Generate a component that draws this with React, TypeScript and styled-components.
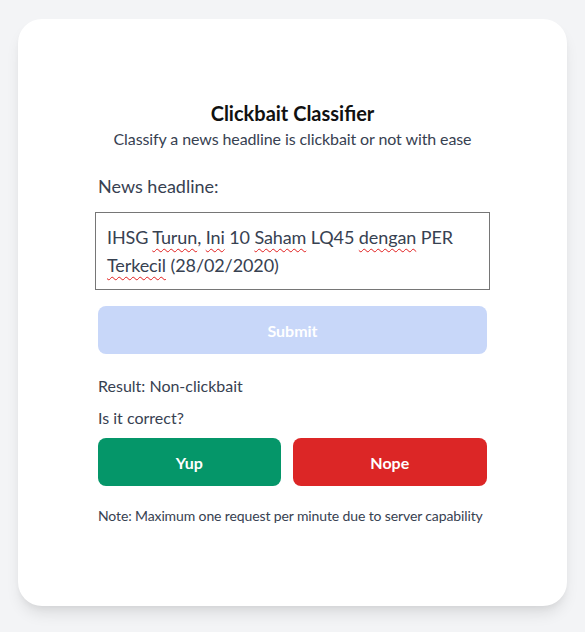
import React from 'react';
import styled, { createGlobalStyle } from 'styled-components';

const GlobalStyle = createGlobalStyle`
    html, body {
        margin: 0;
        padding: 0;
        background: #f3f4f6;
        font-family: Lato, "Noto Sans", sans-serif;
        color: #374151;
    }
`

const Page = styled.div`
    padding: 19px 18px 26px 18px;
    min-height: 100vh;
    box-sizing: border-box;
`

const Card = styled.div`
    background: #fff;
    border-radius: 24px;
    box-shadow: 0 10px 15px -3px rgba(0, 0, 0, 0.1), 0 4px 6px -2px rgba(0, 0, 0, 0.05);
    padding: 80px;
    display: flex;
    flex-direction: column;
`

const Title = styled.h1`
    margin: 0;
    font-size: 20px;
    line-height: 28px;
    font-weight: 700;
    color: #111;
    text-align: center;
`

const Subtitle = styled.p`
    margin: 0;
    font-size: 16px;
    line-height: 24px;
    letter-spacing: -0.1px;
    text-align: center;
    color: #374151;
`

const Label = styled.label`
    margin-top: 21px;
    font-size: 18px;
    line-height: 28px;
    color: #374151;
`

const HeadlineBox = styled.div`
    margin: 12px -3px 0 -3px;
    border: 1px solid #767676;
    padding: 10px 11px;
    min-height: 56px;
    font-size: 18px;
    line-height: 28px;
    letter-spacing: -0.1px;
    color: #374151;
    outline: none;
`

const Typo = styled.span`
    text-decoration: underline wavy #e11d1d;
    text-decoration-thickness: 1px;
    text-underline-offset: 4px;
`

const Button = styled.button<{ $tone: 'blue' | 'green' | 'red' }>`
    border: none;
    border-radius: 8px;
    height: 48px;
    padding: 0 16px;
    font-family: inherit;
    font-size: 16px;
    font-weight: 700;
    color: #fff;
    cursor: pointer;
    background: ${p => p.$tone === 'blue' ? '#c8d7f9' : p.$tone === 'green' ? '#059669' : '#dc2626'};
    &:disabled { cursor: not-allowed; }
`

const SubmitButton = styled(Button)`
    margin-top: 16px;
`

const ChoiceButton = styled(Button)`
    flex: 1 1 auto;
`

const ResultText = styled.p`
    margin: 20px 0 0 0;
    font-size: 16px;
    line-height: 24px;
`

const Question = styled.p`
    margin: 8px 0 0 0;
    font-size: 16px;
    line-height: 24px;
`

const Choices = styled.div`
    display: flex;
    gap: 12px;
    margin-top: 8px;
`

const Note = styled.p`
    margin: 20px 0 0 0;
    font-size: 14px;
    line-height: 20px;
    letter-spacing: -0.12px;
    white-space: nowrap;
`

export default function App() {
    return (
        <Page>
            <GlobalStyle />
            <Card>
                <Title>Clickbait Classifier</Title>
                <Subtitle>Classify a news headline is clickbait or not with ease</Subtitle>
                <Label>News headline:</Label>
                <HeadlineBox role="textbox" contentEditable suppressContentEditableWarning>
                    IHSG <Typo>Turun</Typo>, <Typo>Ini</Typo> 10 <Typo>Saham</Typo> LQ45 <Typo>dengan</Typo> PER <Typo>Terkecil</Typo> (28/02/2020)
                </HeadlineBox>
                <SubmitButton $tone="blue" disabled>Submit</SubmitButton>
                <ResultText>Result: Non-clickbait</ResultText>
                <Question>Is it correct?</Question>
                <Choices>
                    <ChoiceButton $tone="green">Yup</ChoiceButton>
                    <ChoiceButton $tone="red">Nope</ChoiceButton>
                </Choices>
                <Note>Note: Maximum one request per minute due to server capability</Note>
            </Card>
        </Page>
    )
}
